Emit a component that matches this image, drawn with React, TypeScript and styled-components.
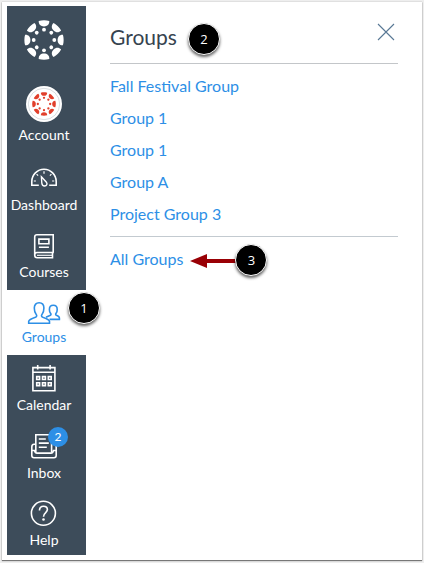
import React from "react";
import styled, { createGlobalStyle, css } from "styled-components";

const Global = createGlobalStyle`
  * { box-sizing: border-box; }
  html, body { margin: 0; padding: 0; background: #fff; }
  body { font-family: Lato, "Liberation Sans", sans-serif; }
`;

const Frame = styled.div`
  width: 424px;
  height: 563px;
  padding: 2px 2px 3px;
  background: #eee;
  overflow: hidden;
`;

const Page = styled.div`
  display: flex;
  height: 558px;
  padding: 4px 24px 0 5px;
  background: #fff;
  box-shadow: 0 1px 1px #777, 0 0 1px #999;
`;

const Sidebar = styled.nav`
  width: 79px;
  height: 549px;
  flex: none;
  background: #3d4c5a;
`;

const LogoBox = styled.div`
  height: 72px;
  padding: 13px 0 0 16px;
`;

const NavItem = styled.a<{ $height: number; $bottom?: number; $active?: boolean }>`
  position: relative;
  display: flex;
  flex-direction: column;
  align-items: center;
  justify-content: flex-end;
  height: ${(p) => p.$height}px;
  padding: 0 5px ${(p) => p.$bottom ?? 9}px 0;
  color: #fff;
  text-decoration: none;
  ${(p) =>
    p.$active &&
    css`
      background: #fff;
      color: #2d8fe6;
    `}
`;

const Icon = styled.svg`
  display: block;
  flex: none;
  fill: none;
  stroke: currentColor;
  stroke-width: 1.6;
  overflow: visible;
`;

const NavLabel = styled.span`
  font-size: 14px;
  line-height: 18px;
  white-space: nowrap;
`;

const Unread = styled.span`
  position: absolute;
  left: 41px;
  top: 4px;
  width: 20px;
  height: 20px;
  border-radius: 50%;
  background: #2d8fe6;
  color: #fff;
  font-size: 12px;
  line-height: 20px;
  text-align: center;
`;

const Tray = styled.main`
  width: 288px;
  margin-left: 24px;
`;

const TrayHeader = styled.header`
  display: flex;
  justify-content: space-between;
  height: 58px;
  border-bottom: 1px solid #c3c6c9;
`;

const TitleRow = styled.div`
  display: flex;
  padding-top: 17px;
`;

const Title = styled.h2`
  width: 78px;
  margin: 0;
  font-size: 21px;
  font-weight: 400;
  line-height: 27px;
  color: #36434f;
`;

const CloseIcon = styled.svg`
  margin: 17px 3px 0 0;
`;

const GroupList = styled.ul`
  height: 173px;
  margin: 0;
  padding: 6px 0 0;
  list-style: none;
  border-bottom: 1px solid #c3cad0;
`;

const GroupRow = styled.li`
  height: 32px;
  line-height: 32px;
`;

const TrayLink = styled.a`
  font-size: 16px;
  color: #2d8fe6;
  text-decoration: none;
  white-space: nowrap;
`;

const AllRow = styled.div`
  display: flex;
  height: 44px;
  line-height: 44px;
`;

const Marker = styled.span`
  flex: none;
  width: 32px;
  height: 32px;
  border: 1px solid #fff;
  border-radius: 50%;
  background: #000;
  box-shadow: 0 2px 3px rgba(0, 0, 0, 0.6);
  color: #fff;
  font-family: "Open Sans", "Noto Sans", sans-serif;
  font-size: 13px;
  line-height: 30px;
  text-align: center;
`;

const NavMarker = styled(Marker)`
  position: absolute;
  left: 61px;
  top: 2px;
  z-index: 1;
`;

const Callout = styled.div`
  display: flex;
  margin-left: 7px;
`;

const Arrow = styled.svg`
  margin: 16px -3px 0 0;
`;

const LinkMarker = styled(Marker)`
  margin-top: 7px;
`;

const angles = [0, 45, 90, 135, 180, 225, 270, 315];

function Ring() {
  return (
    <g stroke="none" fill="currentColor">
      {angles.map((a) => (
        <g key={a} transform={`rotate(${a})`}>
          <path d="M-5.3-18.9C-2-19.9 2-19.9 5.3-18.9C5.5-15.6 3.3-13.6 0-13.6S-5.5-15.6-5.3-18.9Z" />
          <circle cy="-10.3" r="1.9" />
        </g>
      ))}
    </g>
  );
}

const drawings: Record<string, React.ReactNode> = {
  account: (
    <>
      <circle cx="18" cy="18" r="18" fill="#fff" stroke="none" />
      <circle cx="18" cy="18" r="15.7" stroke="#c9ced2" strokeWidth=".7" />
      <g transform="translate(18 18) scale(.6)" color="#e13f2b"><Ring /></g>
    </>
  ),
  dashboard: (
    <>
      <path d="M12.8 29.3H5.8V25.5a12.2 12.2 0 0 1 24.4 0V29.3H23.2" />
      <path d="M18 15.2v2.5M10.6 18.2l1.5 1.5M25.4 18.2l-1.5 1.5M7.8 25h2.1M28.2 25h-2.1" strokeWidth="1.2" />
      <path d="M15.4 20.8L20.4 26.2C21.7 28 20.7 30 18.6 30S15.9 28.7 15.8 27Z" strokeWidth="1.4" />
    </>
  ),
  courses: (
    <>
      <path d="M27.2 29.5V11.8H11C9.4 11.8 8.7 12.7 8.7 14V32C8.7 33.8 9.5 34.8 11.2 34.8H26.5V29.8M27.8 29.5H11C9.5 29.5 8.7 30.4 8.7 32" />
      <path d="M11 32.3h15.5" strokeWidth="1.1" />
      <path d="M12.9 16.1h10v4.6h-10zM12.9 24.2h10" />
    </>
  ),
  groups: (
    <>
      <path d="M2.7 35.2V33.4C3 31.6 5 30.8 9.4 29.3C11 28.7 11 27.4 10.1 26.3C8.5 24.5 8.3 22.3 8.3 20C8.3 16.7 10.2 14.7 13.1 14.7S17.9 16.7 17.9 20C17.9 22.3 17.7 24.5 16.1 26.3C15.2 27.4 15.2 28.7 16.8 29.3C21.2 30.8 23.2 31.6 23.5 33.4V35.2Z" />
      <path d="M20 29.2L24.4 27.2C25.3 26.7 25.1 26 24.5 25.2C23.5 24 23.4 22.7 23.4 21.4C23.4 18.7 25 17.3 27.3 17.3S31.2 18.7 31.2 21.4C31.2 22.7 31.1 24 30.1 25.2C29.5 26 29.5 26.8 30.4 27.2C32.5 28 33.4 28.5 33.4 30V31.4H23.5" />
    </>
  ),
  calendar: (
    <>
      <path d="M6.9 11.6H28.9V34.8H6.9zM7 16.3h21.8M11.7 9v4.4M24.1 9v4.4" />
      <path d="M10.7 20.6h2.9v2.9h-2.9zM16.5 20.6h2.9v2.9h-2.9zM22.3 20.6h2.9v2.9h-2.9zM10.7 26.7h2.9v2.9h-2.9zM16.5 26.7h2.9v2.9h-2.9zM22.3 26.7h2.9v2.9h-2.9z" />
    </>
  ),
  inbox: (
    <>
      <path d="M9.8 28V10.7h15.8V28M12.8 15h7M12.8 19.1h10M12.8 23.2h8" />
      <path d="M9.6 20.2H8C6.5 20.2 5.8 21.2 5.8 23V31.5C5.8 33 6.5 33.7 8 33.7H28C29.5 33.7 30.2 33 30.2 31.5V23C30.2 21.2 29.5 20.2 28 20.2H26M5.8 26.5H8.5C9 28.3 9.7 29.1 11 29.1H25C26.3 29.1 27 28.3 27.5 26.5H30.2" />
    </>
  ),
  help: (
    <>
      <circle cx="17.4" cy="22.3" r="12" />
      <path d="M13.5 19.4C13.5 16.7 15.2 15.3 17.5 15.3C19.9 15.3 21.4 16.7 21.4 18.6C21.4 21.7 17.5 21.5 17.5 25.8" />
      <circle cx="17.5" cy="28.5" r="1.3" fill="currentColor" stroke="none" />
    </>
  ),
};

const items = [
  { id: "account", label: "Account", height: 75 },
  { id: "dashboard", label: "Dashboard", height: 70 },
  { id: "courses", label: "Courses", height: 67 },
  { id: "groups", label: "Groups", height: 65, active: true },
  { id: "calendar", label: "Calendar", height: 68 },
  { id: "inbox", label: "Inbox", height: 68, unread: 2 },
  { id: "help", label: "Help", height: 64, bottom: 6 },
];

const groups = ["Fall Festival Group", "Group 1", "Group 1", "Group A", "Project Group 3"];

export default function App() {
  return (
    <Frame>
      <Global />
      <Page>
        <Sidebar>
          <LogoBox>
            <Icon width="42" height="42" viewBox="-21 -21 42 42" color="#fff"><Ring /></Icon>
          </LogoBox>
          {items.map((item) => (
            <NavItem key={item.id} $height={item.height} $bottom={item.bottom} $active={item.active}>
              <Icon width="36" height="40" viewBox="0 0 36 40">{drawings[item.id]}</Icon>
              <NavLabel>{item.label}</NavLabel>
              {item.unread && <Unread>{item.unread}</Unread>}
              {item.active && <NavMarker>1</NavMarker>}
            </NavItem>
          ))}
        </Sidebar>
        <Tray>
          <TrayHeader>
            <TitleRow>
              <Title>Groups</Title>
              <Marker>2</Marker>
            </TitleRow>
            <CloseIcon width="18" height="18" viewBox="0 0 18 18">
              <path d="M1 1l16 16M17 1L1 17" stroke="#587895" strokeWidth="1.1" />
            </CloseIcon>
          </TrayHeader>
          <GroupList>
            {groups.map((name, i) => (
              <GroupRow key={i}><TrayLink>{name}</TrayLink></GroupRow>
            ))}
          </GroupList>
          <AllRow>
            <TrayLink>All Groups</TrayLink>
            <Callout>
              <Arrow width="48" height="16" viewBox="0 0 48 16">
                <path d="M0 8L17 1V6H48V10H17V15Z" fill="#990005" />
              </Arrow>
              <LinkMarker>3</LinkMarker>
            </Callout>
          </AllRow>
        </Tray>
      </Page>
    </Frame>
  );
}
